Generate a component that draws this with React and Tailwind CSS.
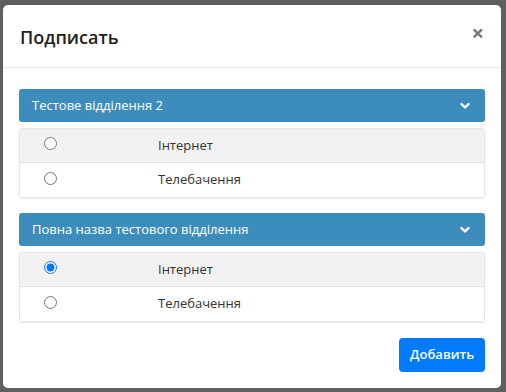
import React from 'react';

const groups = [
  { title: 'Тестове відділення 2', selected: null },
  { title: 'Повна назва тестового відділення', selected: 0 },
];

const options = ['Інтернет', 'Телебачення'];

const Chevron = () => (
  <svg width="10" height="8" viewBox="0 0 10 8" fill="none">
    <path d="M1.5 2 L5 5.5 L8.5 2" stroke="white" strokeWidth="2.4" strokeLinecap="round" strokeLinejoin="round" />
  </svg>
);

const App = () => {
  return (
    <div className="w-[506px] h-[392px] bg-[#5f5f5f] pt-[5px] pl-[3px] overflow-hidden" style={{ fontFamily: '"Open Sans", "Noto Sans", sans-serif' }}>
      <div className="w-[498px] bg-white rounded-[5px]">
        {/* header */}
        <div className="h-[63px] flex items-center justify-between pl-[17px] pr-[17px] border-b border-[#e9ecef]">
          <h2 className="text-[18px] font-semibold text-[#222] leading-none pt-[1px]">Подписать</h2>
          <span className="text-[22px] font-bold text-[#777] leading-none -mt-[8px]">×</span>
        </div>

        {/* body */}
        <div className="px-4 pt-[21px] pb-4 flex flex-col">
          {groups.map((g, gi) => (
            <div key={gi} className={gi > 0 ? 'mt-[15px]' : ''}>
              <div className="h-[33px] bg-[#3d8dbc] rounded-[3px] flex items-center justify-between pl-[13px] pr-[15px]">
                <span className="text-[13px] text-white">{g.title}</span>
                <Chevron />
              </div>
              <div className="mt-[6px] rounded-[3px] border border-[#e6e6e6] shadow-[0_1px_2px_rgba(0,0,0,0.08)] overflow-hidden">
                {options.map((o, oi) => (
                  <div
                    key={oi}
                    className={`h-[34px] flex items-center ${oi === 0 ? 'bg-[#f2f2f2] border-b border-[#e3e3e3]' : 'bg-white'}`}
                  >
                    <div className="w-[138px] pl-[24px] flex items-center -mt-[4px]">
                      <input type="radio" readOnly checked={g.selected === oi} className="m-0 w-[13px] h-[13px]" />
                    </div>
                    <span className="text-[13px] text-[#333]">{o}</span>
                  </div>
                ))}
              </div>
            </div>
          ))}

          <div className="flex justify-end mt-4">
            <button className="h-[34px] px-[11px] bg-[#007bff] text-white text-[13px] font-semibold rounded-[4px]">
              Добавить
            </button>
          </div>
        </div>
      </div>
    </div>
  );
};

export default App;
